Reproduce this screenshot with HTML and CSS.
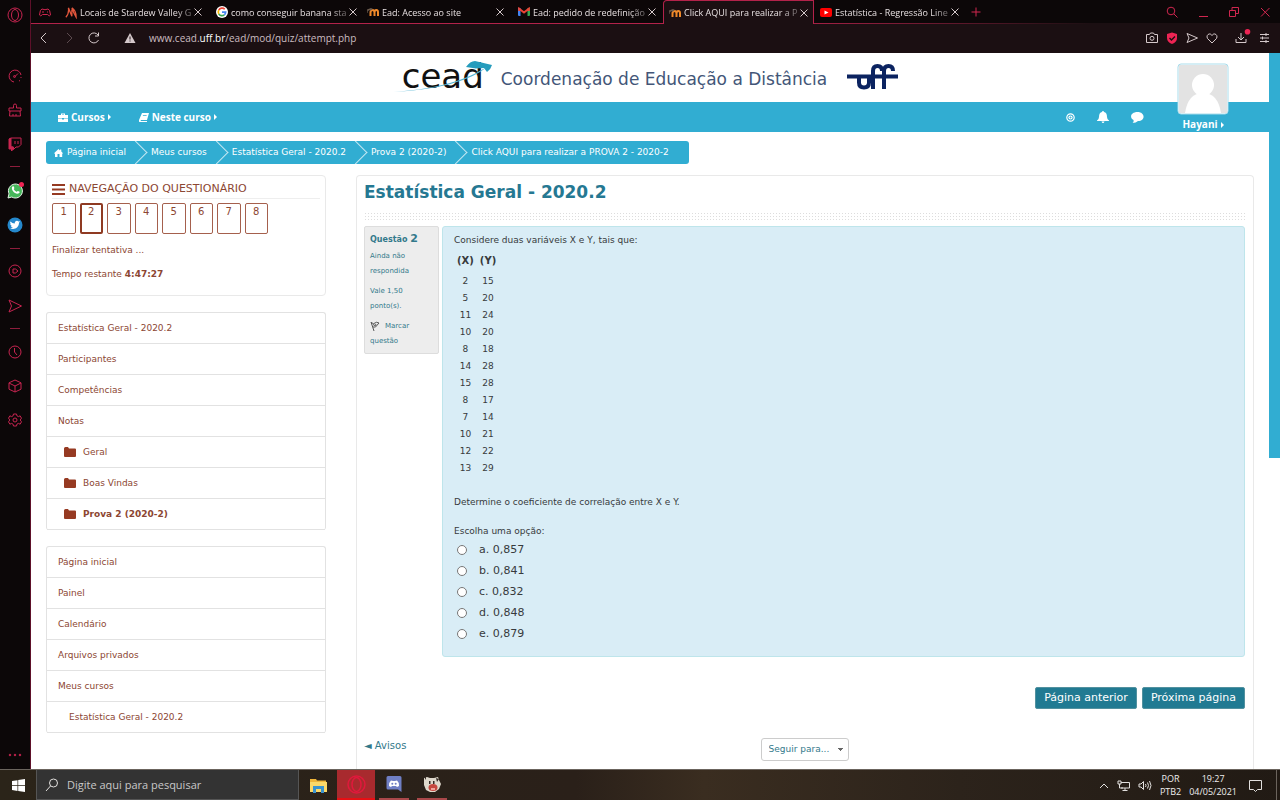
FILE: index.html
```html
<!DOCTYPE html>
<html lang="pt-BR">
<head>
<meta charset="utf-8">
<meta name="viewport" content="width=device-width, initial-scale=1">
<title>Click AQUI para realizar a PROVA 2 - 2020-2</title>
<link rel="stylesheet" href="styles.css">
</head>
<body>
<div class="workspace">
  <nav class="rail" aria-label="Barra lateral">
    <div class="rail-logo"><svg width="16" height="16" viewBox="0 0 16 16"><circle cx="8" cy="8" r="7"/><ellipse cx="8" cy="8" rx="3.5" ry="5.5"/></svg></div>
    <div class="rail-group">
      <svg width="14" height="14" viewBox="0 0 14 14"><path d="M6 13A6 6 0 1 1 13 6M6.500 8L10 4.500M13 8v1M11 11.500l1 .5"/><circle cx="6.500" cy="7.500" r="1"/></svg>
      <svg width="14" height="14" viewBox="0 0 14 14"><path d="M5.500 5V2.500a1.500 1.500 0 0 1 3 0V5H13v3H1V5zM2 8l-.5 5h11L12 8M5 13v-2M8 13v-2"/></svg>
      <svg width="14" height="14" viewBox="0 0 14 14"><path class="solid" d="M1 2L2.500 1v9H5v2.500L3.500 14v-2H1z"/><path d="M3 1h10v6.500L10.500 10H8l-2.500 2.500V10H3zM7 4v3M10 4v3"/></svg>
    </div>
    <hr>
    <div class="rail-apps">
      <svg width="17" height="17" viewBox="0 0 17 17"><path fill="#46b75a" stroke="#e8f5e9" d="M1 16l1-4.200A7 7 0 1 1 4.800 15z"/><path fill="#fff" stroke="none" d="M5 5c1-1.500 2-1 2.300 1 .1.700-.8.800-.5 1.300.6 1.300 1.600 2 2.600 2.500.7.200.8-1 1.500-.8 2.300.8 2.200 1 1 2.200C9 13 4 9 5 5z"/><circle cx="14.500" cy="2.500" r="2.500" fill="#ee2454" stroke="none"/></svg>
      <svg width="16" height="16" viewBox="0 0 16 16"><circle cx="8" cy="8" r="7.500" fill="#2588cc" stroke="none"/><path fill="#fff" stroke="none" d="M3.500 4.500Q5 6.500 7.800 6.500C7.500 3.500 10.500 3 11.500 4.500l1.700-.3-1.200 1.600C12 10.500 7.500 13.500 3 11.300c1.300 0 2-.2 2.700-.8-1-.1-1.500-.8-1.700-1.500h.8C3.800 8.500 3.300 7.700 3.300 7h.6C3 6.200 3 5.300 3.500 4.500z"/></svg>
    </div>
    <hr>
    <div class="rail-media">
      <svg width="14" height="14" viewBox="0 0 14 14"><circle cx="7" cy="7" r="6"/><path d="M5 5h2.500L10 7 7.500 9H5z"/></svg>
      <svg width="14" height="14" viewBox="0 0 14 14"><path d="M1 1l12.500 6L1 13l2.500-6z"/></svg>
    </div>
    <hr>
    <div class="rail-group rail-tools">
      <svg width="14" height="14" viewBox="0 0 14 14"><circle cx="7" cy="7" r="6"/><path d="M6.500 3v4l2.500 3"/></svg>
      <svg width="14" height="14" viewBox="0 0 14 14"><path d="M7 1l6 2.800v6.400L7 13l-6-2.800V3.800zM1 4l6 3 6-3M7 7v6"/></svg>
      <svg width="14" height="14" viewBox="0 0 14 14"><circle cx="7" cy="7" r="2"/><path d="M5.500 1h3l.4 1.800 1.600.8 1.600-.8 1.400 2.400L12.200 7l1.300 1.800-1.400 2.400-1.600-.8-1.600.8-.4 1.800h-3l-.4-1.800-1.600-.8-1.600.8L.5 8.800 1.800 7 .5 5.200l1.400-2.400 1.600.8 1.600-.8z"/></svg>
    </div>
    <button class="rail-more" aria-label="Mais"><svg width="14" height="4" viewBox="0 0 14 4"><circle class="solid" cx="2" cy="2" r=".8"/><circle class="solid" cx="7" cy="2" r=".8"/><circle class="solid" cx="12" cy="2" r=".8"/></svg></button>
  </nav>

  <div class="browser">
    <div class="tabs">
      <svg class="game" width="12" height="9" viewBox="0 0 12 9"><path d="M3 1Q6 2.500 9 1q2 0 2.500 6-1 2-3-.5h-5Q1.500 9 .5 7 1 1 3 1zM3 4h2M8 4h1"/></svg>
      <div class="tab"><svg class="fav" width="12" height="13" viewBox="0 0 14 13"><path fill="none" stroke="#e2563c" stroke-width="1.500" d="M1 12Q5 8 4 1l4 10V3M8 1q5 3 5 11-3-5-5-11"/></svg><span>Locais de Stardew Valley G</span><button aria-label="Fechar"><svg width="8" height="8" viewBox="0 0 8 8"><path d="M.5.5l7 7M7.500.5l-7 7"/></svg></button></div>
      <div class="tab"><svg class="fav" width="12" height="12" viewBox="0 0 13 13"><circle cx="6.500" cy="6.500" r="6.500" fill="#fff"/><g fill="none" stroke-width="1.800"><path stroke="#ea4335" d="M3 4.500A4 4 0 0 1 9.500 3.500"/><path stroke="#fbbc05" d="M3 4.500A4 4 0 0 0 3 8.500"/><path stroke="#34a853" d="M3 8.500A4 4 0 0 0 9 9.600"/><path stroke="#4285f4" d="M9 9.600A4 4 0 0 0 10.500 6.600H6.500"/></g></svg><span>como conseguir banana sta</span><button aria-label="Fechar"><svg width="8" height="8" viewBox="0 0 8 8"><path d="M.5.5l7 7M7.500.5l-7 7"/></svg></button></div>
      <div class="tab"><svg class="fav" width="12" height="10" viewBox="0 0 12 10"><path fill="none" stroke="#f0892a" stroke-width="2" d="M3.500 9V5.500Q3.500 3 5.500 3t2 2.500V9M7.500 5.500Q7.500 3 9.300 3T11 5.500V9"/><path fill="#6b5a4c" d="M0 2.500L4 1l2 1-3 2v-1L1 4v2H.5z"/></svg><span>Ead: Acesso ao site</span><button aria-label="Fechar"><svg width="8" height="8" viewBox="0 0 8 8"><path d="M.5.5l7 7M7.500.5l-7 7"/></svg></button></div>
      <div class="tab"><svg class="fav" width="12" height="10" viewBox="0 0 12 10"><path fill="#4285f4" d="M0 1h2.500v8H1Q0 9 0 8z"/><path fill="#34a853" d="M9.500 1H12v7q0 1-1 1H9.500z"/><path fill="none" stroke="#ea4335" stroke-width="2" d="M1.200 4V1.700L6 5.500l4.800-3.800V4"/></svg><span>Ead: pedido de redefinição</span><button aria-label="Fechar"><svg width="8" height="8" viewBox="0 0 8 8"><path d="M.5.5l7 7M7.500.5l-7 7"/></svg></button></div>
      <div class="tab active"><svg class="fav" width="12" height="10" viewBox="0 0 12 10"><path fill="none" stroke="#f0892a" stroke-width="2" d="M3.500 9V5.500Q3.500 3 5.500 3t2 2.500V9M7.500 5.500Q7.500 3 9.300 3T11 5.500V9"/><path fill="#6b5a4c" d="M0 2.500L4 1l2 1-3 2v-1L1 4v2H.5z"/></svg><span>Click AQUI para realizar a P</span><button aria-label="Fechar"><svg width="8" height="8" viewBox="0 0 8 8"><path d="M.5.5l7 7M7.500.5l-7 7"/></svg></button></div>
      <div class="tab"><svg class="fav" width="12" height="9" viewBox="0 0 12 9"><rect width="12" height="9" rx="2" fill="#f00"/><path fill="#fff" d="M4.500 2.500l4 2-4 2z"/></svg><span>Estatística - Regressão Line</span><button aria-label="Fechar"><svg width="8" height="8" viewBox="0 0 8 8"><path d="M.5.5l7 7M7.500.5l-7 7"/></svg></button></div>
      <svg class="plus" width="10" height="10" viewBox="0 0 10 10"><path d="M5 .5v9M.5 5h9"/></svg>
      <div class="window-tools">
        <svg width="12" height="12" viewBox="0 0 12 12"><circle cx="5" cy="5" r="3.800"/><path d="M8 8l3.500 3.500"/></svg>
        <svg width="12" height="12" viewBox="0 0 12 12"><path d="M2 10.500h9"/></svg>
        <svg width="12" height="12" viewBox="0 0 12 12"><path d="M1.500 4.500h6v6h-6zM4 4.500v-3h6.500v6h-3"/></svg>
        <svg width="12" height="12" viewBox="0 0 12 12"><path d="M2 2l8.500 8.500M10.500 2L2 10.500"/></svg>
      </div>
    </div>

    <div class="address">
      <svg width="12" height="12" viewBox="0 0 12 12"><path d="M8 1L3 6l5 5"/></svg>
      <svg class="dim" width="12" height="12" viewBox="0 0 12 12"><path d="M4 1l5 5-5 5"/></svg>
      <svg width="12" height="12" viewBox="0 0 12 12"><path d="M10.500 8A5 5 0 1 1 10 3M10.500.5V4H7"/></svg>
      <svg class="warn" width="12" height="12" viewBox="0 0 12 12"><path fill="#d5c9cb" stroke="none" d="M6 1l5.500 10H.5z"/><path stroke="#1b0f12" d="M6 4.500v3M6 8.500v1"/></svg>
      <div class="url">www.cead.<b>uff.br</b>/ead/mod/quiz/attempt.php</div>
      <div class="address-tools">
        <svg width="12" height="12" viewBox="0 0 12 12"><path d="M.5 2.500H3.500l1-1.500h3l1 1.500h3v8H.5z"/><circle cx="6" cy="6.300" r="2"/></svg>
        <svg width="12" height="12" viewBox="0 0 12 12"><path fill="#ee2454" stroke="none" d="M6 .5l5 1.500v4q0 4-5 6-5-2-5-6V2z"/><path stroke="#1b0f12" stroke-width="1.400" d="M3.500 6l2 2L9 4.500"/></svg>
        <svg width="12" height="12" viewBox="0 0 12 12"><path d="M1 1.500L11.500 6 1 10.500 3 6z"/></svg>
        <svg width="12" height="12" viewBox="0 0 12 12"><path d="M6 11L1.500 6.500C-.5 3 4 0 6 3.500 8 0 12.500 3 10.500 6.500z"/></svg>
        <svg class="download" width="16" height="16" viewBox="0 0 16 16"><path d="M6 4v7M3 8l3 3 3-3M1 10v3.500h10V10"/><circle cx="12.500" cy="2.800" r="2.800" fill="#ee2454" stroke="none"/></svg>
        <svg width="12" height="12" viewBox="0 0 12 12"><path d="M1 2.500h9M1 6h9M1 9.500h9M7 1v3M3.500 4.500v3M7 8v3"/></svg>
      </div>
    </div>

    <div class="viewport">
      <div class="page">
        <header class="banner">
          <div class="cead">cead<svg width="96" height="36" viewBox="0 0 96 36"><path fill="#269cbd" d="M72 7q4-6 9-6l17 4q-1 4-5 7l-3-4-8 .5z"/><path fill="#54b4d2" d="M0 32Q52 28 80 14l13-7Q68 28 0 32z"/></svg></div>
          <div class="tagline">Coordenação de Educação a Distância</div>
          <svg class="uff" width="51" height="27" viewBox="0 0 51 27"><path fill="none" stroke="#0b2360" stroke-width="4" d="M0 13.500h12v6q0 5 5 5t5-5v-6M12 13.500h39M26 26V8q0-5 4.500-5T35 8M37 26V8q0-5 4.500-5T46 8"/></svg>
        </header>
        <nav class="menu">
          <a href="#"><svg width="10" height="9" viewBox="0 0 10 9"><path d="M3 2V.5h4V2h3v3H0V2zm1 0h2v-.5H4zM0 5.500h4v1h2v-1h4V9H0z"/></svg>Cursos<i class="caret"></i></a>
          <a href="#"><svg width="10" height="9" viewBox="0 0 10 9"><path d="M3 0h7L8 7H2q-.7 1 0 1h6v1H1Q-.5 9 0 7zM4 2l-.2.700H7.500l.2-.7z" fill-rule="evenodd"/></svg>Neste curso<i class="caret"></i></a>
          <div class="menu-icons">
            <svg width="9" height="9" viewBox="0 0 9 9"><circle cx="4.500" cy="4.500" r="3.700" fill="none" stroke="#fff" stroke-width="1.200"/><circle cx="4.500" cy="4.500" r="2.100"/><path stroke="#31add2" stroke-width=".6" d="M4.500 3.300v2.400M3.300 4.500h2.400"/></svg>
            <svg width="12" height="12" viewBox="0 0 12 12"><path d="M6 0q1 0 1 1 3 .5 3 5 0 2 2 3.500V10H0v-.5Q2 8 2 6q0-4.500 3-5 0-1 1-1zM4.500 10.500h3Q7 12 6 12t-1.500-1.500z"/></svg>
            <svg width="13" height="12" viewBox="0 0 13 12"><path d="M6.500 1C14 1 15 9.500 7 10q-2 2-5.500 2Q3 11 2.500 9C-2 6.500 0 1 6.500 1z"/></svg>
          </div>
          <div class="user">
            <svg width="52" height="52" viewBox="0 0 52 52"><rect x="1" y="1" width="50" height="50" rx="3" fill="#fff" stroke="#a9dceb"/><path fill="#e3e3e3" d="M2 2h48v48H2z"/><circle cx="26" cy="22" r="11" fill="#fff"/><path fill="#fff" d="M8 50q3-20 18-20t18 20z"/></svg>
            <a href="#">Hayani<i class="caret"></i></a>
          </div>
        </nav>
        <nav class="crumbs">
          <a href="#"><svg width="9" height="8" viewBox="0 0 9 8"><path fill="#fff" d="M4.500 0L6 1.500V.5h1.300v2L9 4.300l-.8.400V8H5.500V5h-2v3H1V4.700l-1-.4z"/></svg>Página inicial</a>
          <a href="#">Meus cursos</a><a href="#">Estatística Geral - 2020.2</a><a href="#">Prova 2 (2020-2)</a><a href="#">Click AQUI para realizar a PROVA 2 - 2020-2</a>
        </nav>
        <div class="columns">
          <aside class="side">
            <section class="quiz-nav">
              <h2><svg width="13" height="11" viewBox="0 0 13 11"><path d="M0 1h13M0 5.500h13M0 10h13"/></svg>NAVEGAÇÃO DO QUESTIONÁRIO</h2>
              <div class="numbers"><a href="#">1</a><a class="current" href="#">2</a><a href="#">3</a><a href="#">4</a><a href="#">5</a><a href="#">6</a><a href="#">7</a><a href="#">8</a></div>
              <a class="finish" href="#">Finalizar tentativa ...</a>
              <p>Tempo restante <b>4:47:27</b></p>
            </section>
            <nav class="list">
              <a href="#">Estatística Geral - 2020.2</a><a href="#">Participantes</a><a href="#">Competências</a><a href="#">Notas</a>
              <a class="folder" href="#"><svg width="12" height="10" viewBox="0 0 12 10"><path d="M0 1.500Q0 0 1.500 0h2.500l1 1.500h6q1 0 1 1V9q0 1-1 1H1Q0 10 0 9z"/></svg>Geral</a>
              <a class="folder" href="#"><svg width="12" height="10" viewBox="0 0 12 10"><path d="M0 1.500Q0 0 1.500 0h2.500l1 1.500h6q1 0 1 1V9q0 1-1 1H1Q0 10 0 9z"/></svg>Boas Vindas</a>
              <a class="folder here" href="#"><svg width="12" height="10" viewBox="0 0 12 10"><path d="M0 1.500Q0 0 1.500 0h2.500l1 1.500h6q1 0 1 1V9q0 1-1 1H1Q0 10 0 9z"/></svg>Prova 2 (2020-2)</a>
            </nav>
            <nav class="list">
              <a href="#">Página inicial</a><a href="#">Painel</a><a href="#">Calendário</a><a href="#">Arquivos privados</a><a href="#">Meus cursos</a><a class="nested" href="#">Estatística Geral - 2020.2</a>
            </nav>
          </aside>
          <main class="content">
            <h1>Estatística Geral - 2020.2</h1>
            <div class="dots"></div>
            <div class="question">
              <section class="info">
                <h3>Questão <b>2</b></h3>
                <p>Ainda não respondida</p>
                <p>Vale 1,50 ponto(s).</p>
                <p><a href="#"><svg width="11" height="10" viewBox="0 0 11 10"><path d="M1 1l3 9M1 1.500q3 2 4 .5t4 0L5.500 6H3M3.500 3l1 2M6 3l-1 2"/></svg>Marcar questão</a></p>
              </section>
              <form class="formulation">
                <p>Considere duas variáveis X e Y, tais que:</p>
                <table>
                  <thead><tr><th>(X)</th><th>(Y)</th></tr></thead>
                  <tbody>
                    <tr><td>2</td><td>15</td></tr><tr><td>5</td><td>20</td></tr><tr><td>11</td><td>24</td></tr><tr><td>10</td><td>20</td></tr>
                    <tr><td>8</td><td>18</td></tr><tr><td>14</td><td>28</td></tr><tr><td>15</td><td>28</td></tr><tr><td>8</td><td>17</td></tr>
                    <tr><td>7</td><td>14</td></tr><tr><td>10</td><td>21</td></tr><tr><td>12</td><td>22</td></tr><tr><td>13</td><td>29</td></tr>
                  </tbody>
                </table>
                <p class="ask">Determine o coeficiente de correlação entre X e Y.</p>
                <p>Escolha uma opção:</p>
                <div class="answers">
                  <label><input type="radio" name="answer">a. 0,857</label>
                  <label><input type="radio" name="answer">b. 0,841</label>
                  <label><input type="radio" name="answer">c. 0,832</label>
                  <label><input type="radio" name="answer">d. 0,848</label>
                  <label><input type="radio" name="answer">e. 0,879</label>
                </div>
              </form>
            </div>
            <div class="actions"><button>Página anterior</button><button>Próxima página</button></div>
            <div class="jump"><a href="#">◄ Avisos</a><select aria-label="Seguir para"><option>Seguir para...</option></select></div>
          </main>
        </div>
      </div>
      <div class="scroll"><div class="thumb"></div></div>
    </div>
  </div>
</div>

<footer class="taskbar">
  <button class="start" aria-label="Iniciar"><svg width="13" height="13" viewBox="0 0 13 13"><path fill="#fff" d="M0 2l5.500-.8v5H0zM6.200 1L13 0v6.200H6.200zM0 6.900h5.500v5L0 11.100zM6.200 6.900H13V13l-6.800-1z"/></svg></button>
  <label class="search"><svg width="14" height="14" viewBox="0 0 14 14"><circle cx="8.500" cy="5" r="4"/><path d="M5.500 8L1 13"/></svg><input type="text" placeholder="Digite aqui para pesquisar"></label>
  <div class="apps">
    <button aria-label="Explorador"><svg width="17" height="15" viewBox="0 0 17 15"><path fill="#f0b63a" d="M0 1h6l1 1.500h9V14H0z"/><path fill="#fbd869" d="M0 4h17v10H0z"/><path fill="#3a93cf" d="M3 8h11v7h-3v-4H6v4H3z"/></svg></button>
    <button class="opera" aria-label="Opera"><svg width="19" height="19" viewBox="0 0 19 19"><circle cx="9.500" cy="9.500" r="8.500"/><ellipse cx="9.500" cy="9.500" rx="4.500" ry="7"/></svg></button>
    <button class="open" aria-label="Discord"><svg width="16" height="16" viewBox="0 0 16 16"><path fill="#6f7fc4" d="M2 0h12q1.500 0 1.500 1.500V16L12 13.500H2Q.5 13.500.5 12V1.500Q.5 0 2 0z"/><path fill="#fff" d="M3 10q0-4 2-5.500l2 .5h2l2-.5q2 1.500 2 5.500l-2 1-1-1H6l-1 1z"/><circle cx="6.300" cy="7.800" r="1" fill="#6f7fc4"/><circle cx="9.700" cy="7.800" r="1" fill="#6f7fc4"/></svg></button>
    <button class="open" aria-label="Jogo"><svg width="18" height="16" viewBox="0 0 18 16"><path fill="#ded8cc" d="M1 2l3-1 3 1h4l4-1 1 3 2 4-2 5-4 3H7l-4-2-2-5z"/><ellipse cx="10" cy="11.500" rx="4.500" ry="3.500" fill="#c4473f"/><path fill="#332a25" d="M1 1l2 0 0 3zM13 2l3 1-2 3zM6 5h1.500v3H6zM10 5h1.500v3H10z"/><path fill="#f0a29a" d="M8 12h4v2H8z"/></svg></button>
  </div>
  <div class="tray">
    <svg width="10" height="7" viewBox="0 0 10 7"><path d="M1 6l4-4 4 4"/></svg>
    <svg width="13" height="11" viewBox="0 0 13 11"><path d="M4 2.500h8.500v5.500H4M1 1h3v3H1zM2.500 4v4H6M8 8v2M5.500 10.500h5"/></svg>
    <svg width="14" height="11" viewBox="0 0 14 11"><path d="M1 4h2l2.500-2.500v8L3 7H1zM7.500 4q1 1.500 0 3M9.500 2.500q2 3 0 6M11.500 1q3 4.500 0 9"/></svg>
    <div class="stack">POR<br>PTB2</div>
    <div class="stack clock">19:27<br>04/05/2021</div>
    <svg width="13" height="13" viewBox="0 0 13 13"><path d="M.5 1.500h12v9H8.500l-2 2-2-2h-4z"/></svg>
  </div>
  <div class="desktop-edge"></div>
</footer>
</body>
</html>
```
FILE: styles.css
```css
* { box-sizing: border-box; }
body {
  margin: 0;
  height: 100vh;
  display: flex;
  flex-direction: column;
  overflow: hidden;
  background: #fff;
  font: 9px/15px "DejaVu Sans", sans-serif;
}
a { text-decoration: none; color: inherit; }
button { font: inherit; color: inherit; border: 0; background: none; padding: 0; }
svg { flex: none; display: block; }
p, h1, h2, h3 { margin: 0; font-weight: normal; }

.workspace { flex: 1; min-height: 0; display: flex; }

/* browser sidebar */
.rail {
  flex: none;
  width: 30px;
  background: #0c0708;
  display: flex;
  flex-direction: column;
  align-items: center;
  padding: 7px 0 12px;
}
.rail svg { fill: none; stroke: #c72450; stroke-width: 1; }
.rail svg .solid { fill: #d0264f; }
.rail hr { width: 10px; height: 1px; border: 0; margin: 0; background: #8e1d3c; }
.rail-logo { margin-bottom: 46px; }
.rail-group { display: flex; flex-direction: column; gap: 20px; margin-bottom: 15px; }
.rail-apps { display: flex; flex-direction: column; align-items: center; gap: 18px; margin: 15px 0; }
.rail-media { display: flex; flex-direction: column; gap: 21px; margin: 15px 0; }
.rail-tools { margin-top: 16px; }
.rail-more { margin-top: auto; }

.browser { flex: 1; min-width: 0; display: flex; flex-direction: column; border-left: 1px solid #5d1029; }

/* tab strip */
.tabs {
  flex: none;
  height: 24px;
  display: flex;
  align-items: stretch;
  background: linear-gradient(90deg, #b3224a 60%, #1b0f12 85%) bottom / 100% 1px no-repeat #0c0708;
  color: #e6dfe0;
  font: 9px/23px "Open Sans", sans-serif;
}
.game, .plus, .window-tools svg { fill: none; stroke: #d0264f; align-self: center; }
.game { margin: 0 15px 0 8px; margin-right: 8px; }
.tab {
  flex: 0 1 151px;
  min-width: 0;
  display: flex;
  align-items: center;
  gap: 3px;
  padding: 0 8px 0 6px;
}
.tab span {
  flex: 1;
  white-space: nowrap;
  mask-image: linear-gradient(90deg, #000 85%, transparent 110%);
}
.tab button svg { fill: none; stroke: #d5c9cb; }
.tab.active {
  background: #1b0f12;
  border: 1px solid #b3224a;
  border-bottom: 0;
  border-radius: 4px 0 0;
  padding-left: 5px;
}
.plus { margin-left: 6px; }
.window-tools { margin-left: auto; display: flex; gap: 19px; padding-right: 9px; }

/* address bar */
.address {
  flex: none;
  height: 29px;
  display: flex;
  align-items: center;
  gap: 13px;
  padding: 0 9px 1px 7px;
  background: #1b0f12;
}
.address svg { fill: none; stroke: #d5c9cb; }
.address svg.dim { stroke: #5c4a4f; }
.warn { margin-left: 11px; }
.url { color: #cbbdc0; font: 10px/20px "Open Sans", sans-serif; }
.url b { color: #fff; font-weight: normal; }
.address-tools { margin-left: auto; display: flex; align-items: center; gap: 8px; }
.address .download { margin-left: 9px; margin-bottom: 2px; }

/* page */
.viewport { flex: 1; min-height: 0; display: flex; }
.page { flex: 1; min-width: 0; overflow: hidden; display: flex; flex-direction: column; background: #fff; }
.scroll { flex: none; width: 11px; background: #fff; }
.thumb { height: 405px; background: #31add2; }

.banner { flex: none; height: 49px; display: flex; align-items: center; justify-content: center; }
.cead { position: relative; color: #111; font-size: 34px; line-height: 46px; margin-bottom: 3px; }
.cead svg { position: absolute; left: -8px; top: 7px; overflow: visible; }
.tagline { margin: 2px 20px 0 17px; color: #435678; font-size: 17px; line-height: 24px; }
.uff { margin-bottom: 3px; }

.menu {
  flex: none;
  height: 30px;
  display: flex;
  align-items: center;
  gap: 28px;
  padding: 0 40px 0 27px;
  background: #31add2;
  color: #fff;
  font: bold 10px/15px "Open Sans", sans-serif;
}
.menu a { display: flex; align-items: center; gap: 3px; }
.menu svg { fill: #fff; }
.caret { border: 3px solid transparent; border-left-color: #fff; border-right: 0; }
.menu-icons { margin-left: auto; display: flex; align-items: center; gap: 22px; }
.user {
  align-self: flex-end;
  display: flex;
  flex-direction: column;
  align-items: center;
  gap: 2px;
  margin-left: 5px;
}

.crumbs {
  flex: none;
  align-self: flex-start;
  display: flex;
  height: 23px;
  margin: 9px 0 11px 15px;
  padding-right: 20px;
  overflow: hidden;
  border-radius: 3px;
  background: #31add2;
  color: #fff;
  line-height: 23px;
}
.crumbs a { position: relative; display: flex; align-items: center; gap: 4px; padding: 0 0 0 8px; white-space: nowrap; }
.crumbs a + a { padding-left: 25px; }
.crumbs a + a::before {
  content: "";
  position: absolute;
  left: 1px;
  top: 3px;
  width: 16px;
  height: 16px;
  border: 1px solid #c4e7f2;
  border-width: 1px 1px 0 0;
  transform: rotate(45deg);
}

.columns { flex: 1; min-height: 0; display: grid; grid-template-columns: 280px 1fr; gap: 30px; padding: 0 15px; }

/* left column */
.side { display: flex; flex-direction: column; gap: 16px; color: #8c4632; }
.quiz-nav { border: 1px solid #e9e9e9; border-radius: 4px; padding: 4px 5px 13px; }
.quiz-nav h2 {
  display: flex;
  align-items: center;
  gap: 4px;
  font-size: 11px;
  line-height: 18px;
  border-bottom: 1px solid #eee;
}
.quiz-nav h2 svg { stroke: #963a22; stroke-width: 2; }
.numbers { display: grid; grid-template-columns: repeat(8, 1fr); gap: 4px; width: 216px; margin: 4px 0 9px; }
.numbers a {
  height: 31px;
  border: 1px solid #a5604d;
  border-radius: 2px;
  text-align: center;
  font-size: 10px;
}
.numbers .current { border: 2px solid #8f3a22; line-height: 13px; }
.finish { display: block; margin-bottom: 9px; }
.list { border: 1px solid #e2e2e2; border-bottom: 0; border-radius: 3px; }
.list a {
  display: flex;
  align-items: center;
  height: 31px;
  padding-left: 11px;
  border-bottom: 1px solid #e2e2e2;
}
.list .folder { gap: 7px; padding-left: 17px; }
.list .here { font-weight: bold; }
.list .nested { padding-left: 22px; }
.list svg { fill: #963a22; }

/* question */
.content {
  min-width: 0;
  border: 1px solid #e9e9e9;
  border-bottom: 0;
  border-radius: 4px 4px 0 0;
  padding: 3px 8px 0 7px;
  color: #373a3c;
}
.content h1 { color: #257892; font-size: 17px; line-height: 26px; font-weight: bold; }
.dots {
  height: 9px;
  margin: 7px 0 5px;
  background: radial-gradient(circle, #ddd 1px, transparent 1px) 0 0 / 3px 3px;
}
.question { display: grid; grid-template-columns: 75px 1fr; gap: 3px; align-items: start; }
.info {
  border: 1px solid #ddd;
  border-radius: 2px;
  background: #ededed;
  color: #33798b;
  padding: 2px 20px 4px 5px;
  font-size: 7px;
}
.info h3 { font-size: 8px; line-height: 19px; font-weight: bold; white-space: nowrap; }
.info h3 b { font-size: 11px; }
.info p { margin-bottom: 5px; }
.info p + p + p { margin-bottom: 0; }
.info svg { display: inline-block; vertical-align: middle; margin-right: 4px; fill: none; stroke: #555; }
.formulation {
  border: 1px solid #bee5eb;
  border-radius: 3px;
  background: #d9edf6;
  padding: 6px 11px 9px;
}
.formulation table { border-collapse: collapse; margin-bottom: 18px; }
.formulation th, .formulation td { padding: 0 3px; text-align: center; line-height: 17px; }
.formulation th { line-height: 25px; font-size: 10px; }
.formulation .ask { margin-bottom: 14px; }
.answers { display: flex; flex-direction: column; align-items: flex-start; }
.answers label { display: flex; align-items: center; gap: 12px; font-size: 11px; line-height: 21px; }
.answers label + label { margin-top: 0; }
.answers input {
  appearance: none;
  width: 10px;
  height: 10px;
  margin: 0 0 0 3px;
  border: 1px solid #777;
  border-radius: 50%;
  background: #fff;
}
.formulation { padding-bottom: 12px; }
.actions { display: flex; justify-content: flex-end; gap: 5px; margin: 30px 0 29px; }
.actions button {
  padding: 0 8px;
  border: 1px solid #52919f;
  border-radius: 2px;
  background: #217a92;
  color: #fff;
  font-size: 11px;
  line-height: 20px;
}
.jump { display: grid; grid-template-columns: 1fr auto 1fr; color: #33798b; }
.jump a { font-size: 10px; }
.jump select {
  appearance: none;
  height: 23px;
  padding: 0 18px 0 7px;
  border: 1px solid #ccc;
  border-radius: 3px;
  background:
    linear-gradient(45deg, transparent 50%, #666 50%) right 7px center / 4px 3px no-repeat,
    linear-gradient(-45deg, transparent 50%, #666 50%) right 4px center / 4px 3px no-repeat,
    #fff;
  color: inherit;
  font: inherit;
}

/* taskbar */
.taskbar {
  flex: none;
  height: 31px;
  display: flex;
  border-top: 1px solid #6b645d;
  background: linear-gradient(90deg, #2b2419, #2a2019 45%, #3a2d20 55%, #2c231b 75%, #211a14);
  color: #eee;
}
.start { width: 36px; display: flex; align-items: center; justify-content: center; }
.search {
  width: 263px;
  display: flex;
  align-items: center;
  gap: 8px;
  padding-left: 8px;
  border: 1px solid #555;
  border-top: 0;
  background: #333;
}
.search svg, .tray svg { fill: none; stroke: #e2e0de; }
.search input { flex: 1; min-width: 0; padding: 0; border: 0; outline: 0; background: none; font: 11px/20px "Open Sans", sans-serif; }
.search input::placeholder { color: #c8c8c8; }
.apps { display: flex; }
.apps button { width: 38px; display: grid; place-items: center; }
.apps .opera { background: #a82a2e; border-bottom: 2px solid #e60f14; }
.opera svg { fill: none; stroke: #e0193c; stroke-width: 1.5; }
.apps .open { border-bottom: 2px solid #a9484a; width: 30px; margin: 0 4px; }
.tray { margin-left: auto; display: flex; align-items: center; gap: 8px; padding-right: 14px; }
.stack { text-align: center; font: 9px/13px "Open Sans", sans-serif; }
.tray .clock { margin-right: 4px; }
.desktop-edge { width: 4px; border-left: 1px solid #6b645d; }
```
